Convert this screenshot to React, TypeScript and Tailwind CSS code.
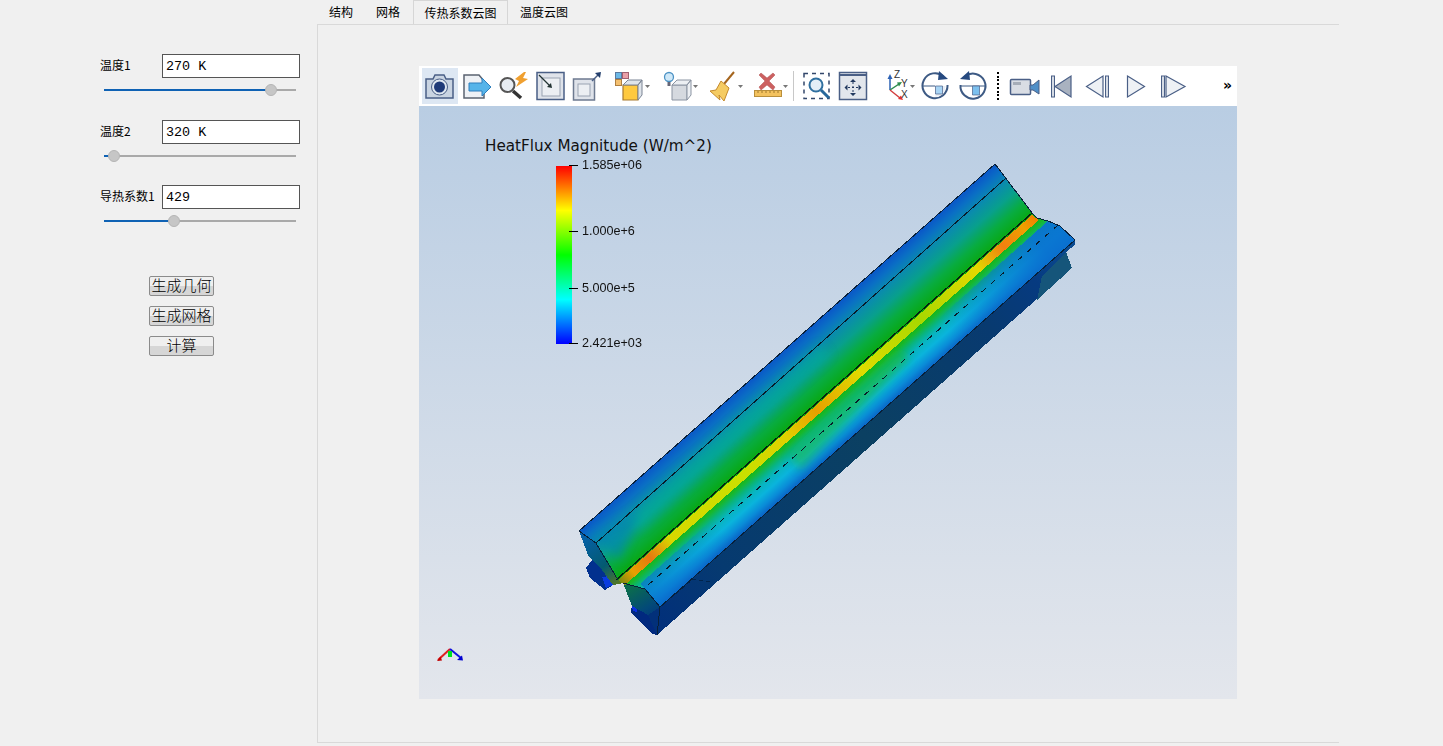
import React from 'react';

const cjk = { fontFamily: '"Noto Sans CJK SC", sans-serif' };

function ParamRow({ label, value, percent, mt }: { label: string; value: string; percent: number; mt: string }) {
  return (
    <div className={mt}>
      <div className="flex h-[24px] items-center">
        <span className="w-[62px] -translate-y-[1px] whitespace-nowrap text-[12px] leading-none text-black">{label}</span>
        <div className="flex h-[24px] w-[138px] items-center border-[1.5px] border-[#555555] bg-white pl-[3px] pt-[2px] font-['Liberation_Mono',monospace] text-[13.4px] text-black">
          {value}
        </div>
      </div>
      <div className="relative ml-[4px] mt-[11px] h-[2px] w-[192px] bg-[#a9a9a9]">
        <div className="h-[2px] bg-[#0f62b4]" style={{ width: `${percent}%` }} />
        <div
          className="absolute top-[-5px] ml-[-6px] h-[12px] w-[12px] rounded-full border border-[#b5b5b5] bg-[#c6c6c6]"
          style={{ left: `${percent}%` }}
        />
      </div>
    </div>
  );
}

function QtButton({ label }: { label: string }) {
  return (
    <button
      type="button"
      className="flex h-[20px] w-[65px] items-center justify-center rounded-[2px] border border-[#8b8b8b] bg-[linear-gradient(#efefef_0%,#efefef_50%,#d6d6d6_50%,#d6d6d6_100%)] pb-[3px] text-[15px] font-light leading-none text-black"
    >
      {label}
    </button>
  );
}

function Slot({ w, active, children }: { w: string; active?: boolean; children: React.ReactNode }) {
  return (
    <div className={`flex h-[36px] shrink-0 items-center justify-center ${w} ${active ? 'bg-[#dde7f3]' : ''}`}>{children}</div>
  );
}

function Caret({ x = 27 }: { x?: number }) {
  return <path d={`M${x} 15h5l-2.5 3z`} fill="#777" />;
}

const ink = '#4a5f86';

function Ico({ w = 32, children }: { w?: number; children: React.ReactNode }) {
  return (
    <svg width={w} height={32} viewBox={`0 0 ${w} 32`} fill="none">
      {children}
    </svg>
  );
}

function Toolbar() {
  return (
    <div className="flex h-[40px] items-center bg-white pl-[3px]">
      <Slot w="w-[36px]" active>
        <Ico>
          <path d="M2 9h7l2-4h9l2 4h7v19H2z" fill="#c9d4e2" stroke={ink} strokeWidth="1.5" />
          <circle cx="15.500" cy="17" r="8" fill="#dfe7f0" stroke={ink} />
          <circle cx="15.500" cy="17" r="5.500" fill="#1f3a78" />
        </Ico>
      </Slot>
      <Slot w="w-[36px]">
        <Ico>
          <path d="M4 5h15l5 6v17H4z" fill="#eef1f5" stroke="#5b6370" strokeWidth="1.5" />
          <path d="M9 13h13V8l9 9-9 9v-5H9z" fill="#56b4e9" stroke="#2f7fbd" />
        </Ico>
      </Slot>
      <Slot w="w-[37px]">
        <Ico>
          <circle cx="10.500" cy="15" r="7" fill="#e8edf3" stroke="#555" strokeWidth="2" />
          <path d="M16 21l8 7" stroke="#333" strokeWidth="3.500" />
          <path d="M27 2l-9 7 4 2-3 6 12-8-5-1 3-6z" fill="#f0a030" />
        </Ico>
      </Slot>
      <Slot w="w-[37px]">
        <Ico>
          <rect x="3" y="2.500" width="27" height="27" fill="#dfe3ea" stroke={ink} strokeWidth="1.5" />
          <rect x="8" y="8" width="18" height="18" fill="#eceff3" stroke="#9aa3b2" />
          <path d="M5 5l11 11" stroke="#233" strokeWidth="1.2" />
          <path d="M18 18l-5-1 4-4z" fill="#233" />
        </Ico>
      </Slot>
      <Slot w="w-[38px]">
        <Ico>
          <rect x="2.500" y="9" width="21" height="21" fill="#dfe3ea" stroke="#6d7a90" strokeWidth="1.5" />
          <rect x="7" y="14" width="12" height="12" fill="#eceff3" stroke="#9aa3b2" />
          <path d="M21 11l7-7" stroke={ink} strokeWidth="1.5" />
          <path d="M30 2l-6 1 5 5z" fill="#25406e" />
        </Ico>
      </Slot>
      <Slot w="w-[50px]">
        <Ico w={38}>
          <rect x="3.500" y="2.500" width="6" height="6" fill="#6cb9e6" stroke="#5a7aa0" />
          <rect x="10.500" y="2.500" width="6" height="6" fill="#e9a0a8" stroke="#a06070" />
          <rect x="3.500" y="9.500" width="6" height="6" fill="#f4c070" stroke="#b08040" />
          <path d="M11 15h15v15H11z" fill="#ffc93f" stroke="#a87a30" strokeWidth="1.2" />
          <path d="M11 15l5-5h14l-4 5zM26 15l4-5v15l-4 5z" fill="#dfe4ea" stroke="#7a8494" />
          <Caret x={33} />
        </Ico>
      </Slot>
      <Slot w="w-[48px]">
        <Ico w={38}>
          <circle cx="8" cy="7" r="4.500" fill="#cfe8f8" stroke="#4c92c4" strokeWidth="1.3" />
          <rect x="6.500" y="12" width="3" height="4" fill="#667" />
          <path d="M11 15h15v15H11z" fill="#d5d9df" stroke="#8b94a2" />
          <path d="M11 15l5-5h14l-4 5zM26 15l4-5v15l-4 5z" fill="#eceff3" stroke="#8b94a2" />
          <Caret x={32} />
        </Ico>
      </Slot>
      <Slot w="w-[44px]">
        <Ico w={38}>
          <path d="M27 2L17 14" stroke="#a5651e" strokeWidth="2" />
          <path d="M14 11l8 7-5 13-5-6 1 5-10-9 6-1z" fill="#f5cb62" stroke="#c58a2c" />
          <Caret x={31} />
        </Ico>
      </Slot>
      <Slot w="w-[45px]">
        <Ico w={38}>
          <path d="M9 3l6 5 6-5 2 2-6 6 6 6-2 3-6-5-6 5-2-3 6-6-6-6z" fill="#cc6060" stroke="#b05050" strokeWidth=".5" />
          <rect x="2.500" y="20.500" width="27" height="6" fill="#f3c25f" stroke="#b98f3c" />
          <path d="M6 21v2M10 21v2M14 21v2M18 21v2M22 21v2M26 21v2" stroke="#a0782c" />
          <Caret x={31} />
        </Ico>
      </Slot>
      <div className="h-[30px] w-[1px] bg-[#c8c8c8]" />
      <div className="w-[4px]" />
      <Slot w="w-[37px]">
        <Ico>
          <rect x="3" y="3.500" width="25" height="25" stroke="#33476b" strokeWidth="1.5" strokeDasharray="4 4" />
          <circle cx="15" cy="15" r="6.500" fill="#e4eef7" stroke="#2f6f9f" strokeWidth="2" />
          <path d="M20 20l8 8" stroke="#27679a" strokeWidth="3" />
        </Ico>
      </Slot>
      <Slot w="w-[36px]">
        <Ico>
          <rect x="2.500" y="2.500" width="27" height="27" fill="#e2e6ec" stroke={ink} strokeWidth="1.5" />
          <path d="M3 4h26v2H3z" fill={ink} />
          <path d="M16 9l3 3h-6zM16 26l3-3h-6zM7.500 17.500l3-3v6zM24.500 17.500l-3-3v6z" fill="#22395f" />
          <path d="M16 12v11M11 17.500h10" stroke="#22395f" strokeDasharray="2 2" />
        </Ico>
      </Slot>
      <div className="w-[6px]" />
      <Slot w="w-[44px]">
        <svg width="36" height="32" viewBox="0 0 36 32" fill="none">
          <path d="M9 20V7" stroke="#2d62b5" strokeWidth="1.5" />
          <path d="M9 4l-2.500 5h5z" fill="#2d62b5" />
          <path d="M9 20l9-6" stroke="#2c8c4c" strokeWidth="1.5" />
          <path d="M21 12l-5 .500 2 4z" fill="#2c8c4c" />
          <path d="M9 20l10 8" stroke="#d23c3c" strokeWidth="1.5" />
          <path d="M22 30l-5-1 3-3.500z" fill="#e03030" />
          <text x="13" y="8" fontSize="10" fontFamily="'Liberation Sans', sans-serif" fill="#333">Z</text>
          <text x="20" y="17" fontSize="10" fontFamily="'Liberation Sans', sans-serif" fill="#333">Y</text>
          <text x="20" y="28" fontSize="10" fontFamily="'Liberation Sans', sans-serif" fill="#333">X</text>
          <path d="M29 15h5l-2.500 3z" fill="#777" />
        </svg>
      </Slot>
      <div className="-ml-[4px]" />
      <Slot w="w-[37px]">
        <Ico>
          <path d="M23.500 6.500A12.500 12.500 0 1 0 27.500 15" stroke="#3d5a84" strokeWidth="2" />
          <path d="M3 16h12" stroke="#3d5a84" />
          <path d="M15.500 16h10v1a11 11 0 0 1-10 10z" fill="#e6eef6" />
          <path d="M15.500 16h7v8h-7z" fill="#a8d4f4" stroke={ink} strokeWidth=".7" />
          <path d="M19 1l9 8-10 1z" fill="#274a80" />
        </Ico>
      </Slot>
      <Slot w="w-[37px]">
        <Ico>
          <path d="M8 6.500A12.500 12.500 0 1 1 3.500 15" stroke="#3d5a84" strokeWidth="2" />
          <path d="M3.500 16h25" stroke="#3d5a84" />
          <path d="M15.500 16h7v9h-7z" fill="#7cc0ee" stroke={ink} strokeWidth=".7" />
          <path d="M12 1L3 9l10 1z" fill="#274a80" />
        </Ico>
      </Slot>
      <div className="ml-[6px] mr-[5px] flex h-[28px] w-[3px] flex-col justify-between">
        {[0, 1, 2, 3, 4, 5, 6, 7].map((i) => (
          <span key={i} className="h-[2px] w-[2px] bg-black" />
        ))}
      </div>
      <Slot w="w-[37px]">
        <Ico>
          <rect x="2.500" y="9.500" width="20" height="15" rx="1" fill="#d9dde4" stroke={ink} strokeWidth="1.5" />
          <rect x="5" y="12" width="8" height="3" fill="#a6adb8" />
          <path d="M22 15h3l6-5v14l-6-4h-3z" fill="#4f8fc8" stroke={ink} />
        </Ico>
      </Slot>
      <Slot w="w-[37px]">
        <Ico>
          <rect x="6.500" y="6" width="3" height="21" fill="#d5dbe4" stroke={ink} />
          <path d="M10 16.500L26 6v21z" fill="#a9b2c0" stroke={ink} strokeWidth="1.2" />
        </Ico>
      </Slot>
      <Slot w="w-[38px]">
        <Ico>
          <path d="M4.500 16.500L21 6v21z" fill="#eef1f5" stroke={ink} strokeWidth="1.2" />
          <rect x="23.500" y="6" width="3" height="21" fill="#d5dbe4" stroke={ink} />
        </Ico>
      </Slot>
      <Slot w="w-[37px]">
        <Ico>
          <path d="M7.500 6l17 10.500L7.500 27z" fill="#eef1f5" stroke={ink} strokeWidth="1.2" />
        </Ico>
      </Slot>
      <Slot w="w-[37px]">
        <Ico>
          <rect x="4.500" y="6" width="3" height="21" fill="#d5dbe4" stroke={ink} />
          <path d="M9 6l19 10.500L9 27z" fill="#eef1f5" stroke={ink} strokeWidth="1.2" />
        </Ico>
      </Slot>
      <div className="ml-[32px] pb-[2px] font-['DejaVu_Sans',sans-serif] text-[14px] font-bold leading-none text-black">»</div>
    </div>
  );
}

function BeamModel() {
  return (
    <svg className="absolute left-0 top-0" width="818" height="593" viewBox="419 106 818 593" fill="none" shapeRendering="crispEdges">
      <defs>
        <linearGradient id="top" gradientUnits="userSpaceOnUse" x1="579" y1="531" x2="652" y2="614">
          <stop offset="0" stopColor="#0a58c8" />
          <stop offset=".08" stopColor="#0a70c4" />
          <stop offset=".18" stopColor="#0a8cac" />
          <stop offset=".3" stopColor="#08a08c" />
          <stop offset=".43" stopColor="#08ac40" />
          <stop offset=".56" stopColor="#08a810" />
          <stop offset=".66" stopColor="#18b828" />
          <stop offset=".72" stopColor="#08b480" />
          <stop offset=".78" stopColor="#08b4c0" />
          <stop offset=".85" stopColor="#0ab4dc" />
          <stop offset=".93" stopColor="#0a8cd8" />
          <stop offset="1" stopColor="#0a60c4" />
        </linearGradient>
        <linearGradient id="ridge" gradientUnits="userSpaceOnUse" x1="618" y1="580" x2="1035" y2="216">
          <stop offset="0" stopColor="#7a8a10" />
          <stop offset=".03" stopColor="#e8a000" />
          <stop offset=".07" stopColor="#e87810" />
          <stop offset=".12" stopColor="#d8d800" />
          <stop offset=".3" stopColor="#c8e000" />
          <stop offset=".4" stopColor="#e0d000" />
          <stop offset=".47" stopColor="#e8a000" />
          <stop offset=".58" stopColor="#e0dc00" />
          <stop offset=".72" stopColor="#a8d800" />
          <stop offset=".86" stopColor="#e4d800" />
          <stop offset=".92" stopColor="#f08010" />
          <stop offset=".97" stopColor="#f0a000" />
          <stop offset="1" stopColor="#f08000" />
        </linearGradient>
        <linearGradient id="laneBlue" gradientUnits="userSpaceOnUse" x1="650" y1="596" x2="1066" y2="232">
          <stop offset="0" stopColor="#0a70d0" stopOpacity=".7" />
          <stop offset=".18" stopColor="#0a70d0" stopOpacity="0" />
          <stop offset=".72" stopColor="#0a70d0" stopOpacity="0" />
          <stop offset=".95" stopColor="#0a70d0" stopOpacity=".9" />
          <stop offset="1" stopColor="#0a70d0" stopOpacity=".9" />
        </linearGradient>
        <linearGradient id="side" gradientUnits="userSpaceOnUse" x1="660" y1="620" x2="1072" y2="255">
          <stop offset="0" stopColor="#02307a" />
          <stop offset=".15" stopColor="#063a70" />
          <stop offset=".5" stopColor="#0b4062" />
          <stop offset=".8" stopColor="#083a70" />
          <stop offset=".92" stopColor="#063a80" />
          <stop offset="1" stopColor="#0a4a90" />
        </linearGradient>
        <linearGradient id="endL" gradientUnits="userSpaceOnUse" x1="585" y1="535" x2="620" y2="585">
          <stop offset="0" stopColor="#0560a8" />
          <stop offset=".6" stopColor="#045a70" />
          <stop offset="1" stopColor="#5a7a20" />
        </linearGradient>
        <linearGradient id="endR" gradientUnits="userSpaceOnUse" x1="630" y1="590" x2="655" y2="630">
          <stop offset="0" stopColor="#0a6a50" />
          <stop offset=".5" stopColor="#034a78" />
          <stop offset="1" stopColor="#012a80" />
        </linearGradient>
        <filter id="soft" x="-20%" y="-20%" width="140%" height="140%">
          <feGaussianBlur stdDeviation="5" />
        </filter>
        <clipPath id="topClip">
          <path d="M579 531L995 164L1033 214L1037 218L1048 221L1060 226L1075 240L660 607L645 589L623 583L618 580L596 543Z" />
        </clipPath>
      </defs>

      {/* underside and feet */}
      <path d="M592 560L586 568L590 578L605 590L613 585L605 570Z" fill="#02308e" />
      <path d="M602 577L610 576L615 584L606 588Z" fill="#0a3ce0" />
      <path d="M632 604L631 612L652 634L657 635L648 615Z" fill="#01297e" />
      <path d="M632 606L636 604L637 612L633 611Z" fill="#0a30e0" />

      {/* side of the beam */}
      <path d="M660 607L1075 240L1075 245L1066 252L1072 268L657 635L648 615Z" fill="url(#side)" />
      <path d="M1066 252L1072 268L1037 300L1042 276Z" fill="#15557a" />
      <path d="M660 607L693 579L712 582" stroke="#02244c" strokeWidth="1" strokeDasharray="4 3" />

      {/* end faces */}
      <path d="M579 531L596 543L618 580L623 583L613 585L602 570L588 555Z" fill="url(#endL)" />
      <path d="M623 583L645 589L660 607L648 615L632 606Z" fill="url(#endR)" />

      {/* top face */}
      <path d="M579 531L995 164L1033 214L1037 218L1048 221L1060 226L1075 240L660 607L645 589L623 583L618 580L596 543Z" fill="url(#top)" />
      <path d="M640 584L1048 221L1060 226L1075 240L660 607L645 589Z" fill="url(#laneBlue)" />
      <g clipPath="url(#topClip)" filter="url(#soft)" shapeRendering="auto">
        <path d="M625 520L820 345L830 355L640 530Z" fill="#08b0a0" opacity=".5" />
        <path d="M590 536L640 510L620 560Z" fill="#0884b4" opacity=".55" />
        <path d="M790 455L900 350L910 358L800 470Z" fill="#20c000" opacity=".4" />
      </g>

      {/* ridge and edge lines */}
      <path d="M618 580L1032 215L1039 220L625 585Z" fill="url(#ridge)" />
      <path d="M596 543L1006 178" stroke="#0a1a28" strokeWidth="1" />
      <path d="M616 580L1032 213" stroke="#0a1a10" strokeWidth="1.2" />
      <path d="M648 585L1058 225" stroke="#0a1a28" strokeWidth="1" strokeDasharray="6 6" />
      <path d="M579 531L995 164L1033 214L1037 218L1048 221L1060 226L1075 240L660 607" stroke="#08203a" strokeWidth="1" />
      <path d="M596 543L618 580M623 583L645 589L660 607L657 635M579 531L596 543" stroke="#08203a" strokeWidth="1" />
    </svg>
  );
}

function ViewerCanvas() {
  const titleText = "absolute font-['DejaVu_Sans',sans-serif] leading-none text-[#111] whitespace-nowrap";
  const tickText = "absolute font-['Liberation_Sans',sans-serif] leading-none text-[#111] whitespace-nowrap";
  return (
    <div className="relative h-[593px] bg-[linear-gradient(#b9cde3,#e3e6ec)]">
      <BeamModel />
      <div className={`${titleText} left-[66px] top-[33px] text-[15.2px]`}>HeatFlux Magnitude (W/m^2)</div>
      <div className="absolute left-[137px] top-[60px] h-[178px] w-[16px] bg-[linear-gradient(#ff0000_0%,#ffff00_25%,#00ff00_50%,#00ffff_75%,#0000ff_100%)]" />
      <div className="absolute left-[150px] top-[59px] h-[1px] w-[9px] bg-black" />
      <div className="absolute left-[150px] top-[125px] h-[1px] w-[9px] bg-black" />
      <div className="absolute left-[150px] top-[182px] h-[1px] w-[9px] bg-black" />
      <div className="absolute left-[150px] top-[237px] h-[1px] w-[9px] bg-black" />
      <div className={`${tickText} left-[163px] top-[53px] text-[12.6px]`}>1.585e+06</div>
      <div className={`${tickText} left-[163px] top-[119px] text-[12.6px]`}>1.000e+6</div>
      <div className={`${tickText} left-[163px] top-[176px] text-[12.6px]`}>5.000e+5</div>
      <div className={`${tickText} left-[163px] top-[231px] text-[12.6px]`}>2.421e+03</div>
      <svg className="absolute left-[17px] top-[540px]" width="30" height="20" viewBox="0 0 30 20" fill="none">
        <path d="M2 14L14 3" stroke="#e02020" strokeWidth="2" />
        <path d="M1 15l5-.500-1.500-4z" fill="#c00000" />
        <path d="M14 3L25 12" stroke="#1010e0" strokeWidth="2" />
        <path d="M21 14l6 .500-1-5z" fill="#0000d0" />
        <rect x="12" y="5" width="4" height="6" fill="#00e020" />
      </svg>
    </div>
  );
}

export default function App() {
  return (
    <div className="flex h-[746px] w-[1443px] overflow-hidden bg-[#f0f0f0]" style={cjk}>
      <aside className="w-[317px] shrink-0 pl-[100px] pt-[54px]">
        <ParamRow label="温度1" value="270 K" percent={87} mt="" />
        <ParamRow label="温度2" value="320 K" percent={5} mt="mt-[29px]" />
        <ParamRow label="导热系数1" value="429" percent={36.500} mt="mt-[28px]" />
        <div className="ml-[49px] mt-[54px] flex flex-col gap-[10px]">
          <QtButton label="生成几何" />
          <QtButton label="生成网格" />
          <QtButton label="计算" />
        </div>
      </aside>

      <main className="flex h-[743px] w-[1022px] shrink-0 flex-col">
        <nav className="flex h-[25px] text-[12px] leading-none text-black">
          <div className="flex h-[24px] items-center pl-[12px] pr-[11px]">结构</div>
          <div className="flex h-[24px] items-center pl-[12px] pr-[13px]">网格</div>
          <div className="flex h-[25px] w-[95px] items-center justify-center border-x border-t border-[#d6d6d6] pb-[1px]">传热系数云图</div>
          <div className="flex h-[24px] items-center pl-[12px]">温度云图</div>
        </nav>
        <section className="-mt-[1px] flex-1 border-b border-l border-t border-[#d9d9d9] pl-[101px] pt-[41px]">
          <div className="w-[818px]">
            <Toolbar />
            <ViewerCanvas />
          </div>
        </section>
      </main>
    </div>
  );
}
